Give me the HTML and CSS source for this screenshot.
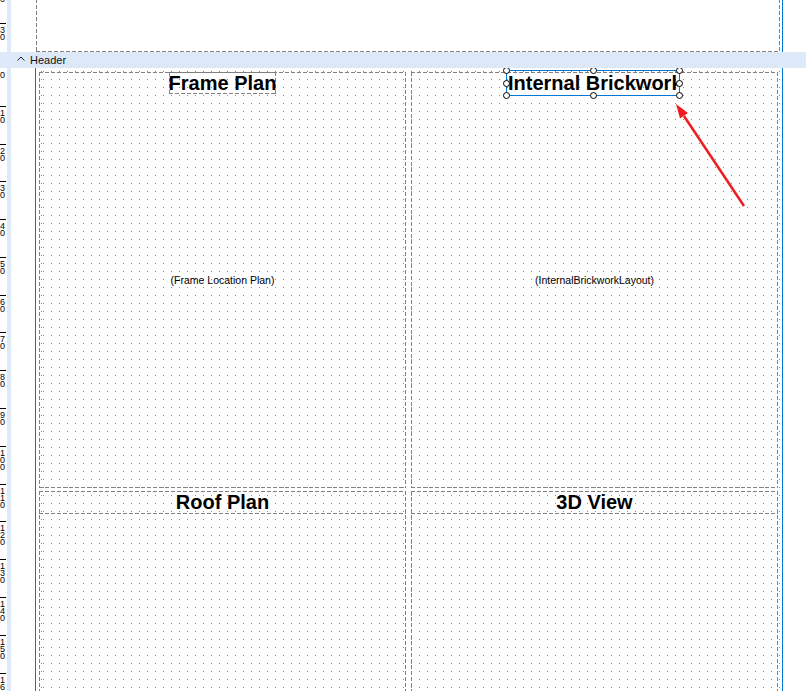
FILE: index.html
```html
<!DOCTYPE html>
<html lang="en">
<head>
  <meta charset="UTF-8" />
  <meta name="viewport" content="width=device-width, initial-scale=1.0"/>
  <title>Report Designer</title>
  <link rel="stylesheet" href="styles.css">
</head>
<body>
  <!-- page header band (scrolled mostly out of view) -->
  <div class="band band-page">
    <div class="ruler ruler-page">
      <div class="tick">20</div>
      <div class="tick">30</div>
    </div>
    <div class="sheet sheet-page">
      <div class="page-area dashed"></div>
    </div>
  </div>

  <div class="band-title">
    <svg class="caret" width="8" height="5" viewBox="0 0 8 5">
      <polyline points="0.5,4.5 4,1 7.5,4.5" fill="none" stroke="#222" stroke-width="1"/>
    </svg>
    <span>Header</span>
  </div>

  <div class="band band-body">
    <div class="ruler">
      <div class="tick first">0</div>
      <div class="tick">10</div>
      <div class="tick">20</div>
      <div class="tick">30</div>
      <div class="tick">40</div>
      <div class="tick">50</div>
      <div class="tick">60</div>
      <div class="tick">70</div>
      <div class="tick">80</div>
      <div class="tick">90</div>
      <div class="tick">100</div>
      <div class="tick">110</div>
      <div class="tick">120</div>
      <div class="tick">130</div>
      <div class="tick">140</div>
      <div class="tick">150</div>
      <div class="tick">160</div>
    </div>

    <div class="sheet dots">
      <div class="grid">
        <div class="cell dashed">
          <div class="caption dashed">Frame Plan</div>
          <div class="placeholder">(Frame Location Plan)</div>
        </div>
        <div class="cell dashed">
          <div class="caption selected">
            <div class="caption-text">Internal Brickwork</div>
            <span class="handle h-tl"></span>
            <span class="handle h-tc"></span>
            <span class="handle h-tr"></span>
            <span class="handle h-ml"></span>
            <span class="handle h-mr"></span>
            <span class="handle h-bl"></span>
            <span class="handle h-bc"></span>
            <span class="handle h-br"></span>
          </div>
          <div class="placeholder">(InternalBrickworkLayout)</div>
        </div>
        <div class="cell dashed">
          <div class="caption caption-wide dashed">Roof Plan</div>
        </div>
        <div class="cell dashed">
          <div class="caption caption-wide dashed">3D View</div>
        </div>
      </div>
    </div>
  </div>

  <!-- annotation arrow pointing at the selected caption -->
  <svg class="arrow" width="806" height="691" viewBox="0 0 806 691">
    <line x1="744" y1="206" x2="684" y2="116" stroke="#ed1c24" stroke-width="2.5"/>
    <polygon points="676,104 688,113 680,118.5" fill="#ed1c24"/>
  </svg>
</body>
</html>
```

FILE: styles.css
```css
html, body {
  margin: 0;
  height: 691px;
  overflow: hidden;
  background: #fff;
}
body {
  font-family: "Liberation Sans", Arial, sans-serif;
  color: #000;
  position: relative;
}
.band {
  display: flex;
  overflow: hidden;
}
.band-page {
  height: 52px;
}
.band-body {
  height: 623px;
}

/* vertical ruler, ticks every 10mm */
.ruler {
  width: 35px;
  flex: none;
  background: linear-gradient(90deg, #fff 0 7px, #dde9f9 7px 11px, #fff 11px);
}
.ruler-page {
  margin-top: -15px;
}
.tick {
  width: 6px;
  height: 10mm;
  box-sizing: border-box;
  border-top: 1px solid #000;
  padding-top: 3px;
  font-size: 9px;
  line-height: 7px;
  word-break: break-all;
}
.tick.first {
  border-top-color: transparent;
}

.sheet {
  width: 746px;
  flex: none;
  border-left: 1px solid #0078d7;
  border-right: 1px solid #0078d7;
}
.sheet-page {
  border-left-color: #fff;
}
.page-area {
  width: 744px;
  height: 53px;
  margin-top: -1px;
}

.band-title {
  height: 16px;
  background: #dde9f9;
  display: flex;
  align-items: center;
  font-size: 11px;
  color: #111;
}
.caret {
  margin-left: 17px;
  margin-right: 5px;
  margin-top: -3px;
}

/* dashed outline used by every report control */
.dashed {
  background:
    repeating-linear-gradient(90deg, #808080 0 4px, transparent 4px 6px) left top / 100% 1px no-repeat,
    repeating-linear-gradient(90deg, #808080 0 4px, transparent 4px 6px) left bottom / 100% 1px no-repeat,
    repeating-linear-gradient(180deg, #808080 0 4px, transparent 4px 6px) left top / 1px 100% no-repeat,
    repeating-linear-gradient(180deg, #808080 0 4px, transparent 4px 6px) right top / 1px 100% no-repeat;
}

/* snap grid: 1px dots every 8px (columns masked by rows) */
.dots {
  position: relative;
}
.dots::before {
  content: "";
  position: absolute;
  inset: 0;
  background: repeating-linear-gradient(90deg, #909090 0 1px, transparent 1px 8px) 7px 0;
  -webkit-mask-image: repeating-linear-gradient(180deg, #000 0 1px, transparent 1px 8px);
  -webkit-mask-position: 0 3px;
  mask-image: repeating-linear-gradient(180deg, #000 0 1px, transparent 1px 8px);
  mask-position: 0 3px;
}

.grid {
  position: relative;
  display: grid;
  grid-template-columns: 367px 367px;
  grid-template-rows: 416px 416px;
  column-gap: 5px;
  row-gap: 3px;
  padding: 4px 0 0 3px;
}
.cell {
  display: grid;
}
.cell > .caption,
.cell > .placeholder {
  grid-area: 1 / 1;
}

.caption {
  justify-self: center;
  align-self: start;
  height: 22px;
  line-height: 22px;
  font-size: 20px;
  font-weight: bold;
  white-space: nowrap;
}
.caption-wide {
  justify-self: stretch;
  height: 23px;
  line-height: 23px;
  text-align: center;
}
.placeholder {
  justify-self: center;
  align-self: center;
  font-size: 10.5px;
  color: #000;
}

/* selected caption with resize handles */
.selected {
  position: relative;
  justify-self: start;
  margin-left: 97px;
  width: 170px;
  outline: 1px solid #0078d7;
  outline-offset: 1px;
}
.caption-text {
  overflow: hidden;
}
.handle {
  position: absolute;
  width: 7px;
  height: 7px;
  box-sizing: border-box;
  border: 1px solid #000;
  border-radius: 50%;
  background: #fff;
}
.h-tl, .h-tc, .h-tr { top: -5px; }
.h-bl, .h-bc, .h-br { bottom: -5px; }
.h-ml, .h-mr { top: calc(50% - 3.5px); }
.h-tl, .h-ml, .h-bl { left: -5px; }
.h-tr, .h-mr, .h-br { right: -5px; }
.h-tc, .h-bc { left: calc(50% - 3.5px); }

.arrow {
  position: absolute;
  left: 0;
  top: 0;
  pointer-events: none;
}
```
